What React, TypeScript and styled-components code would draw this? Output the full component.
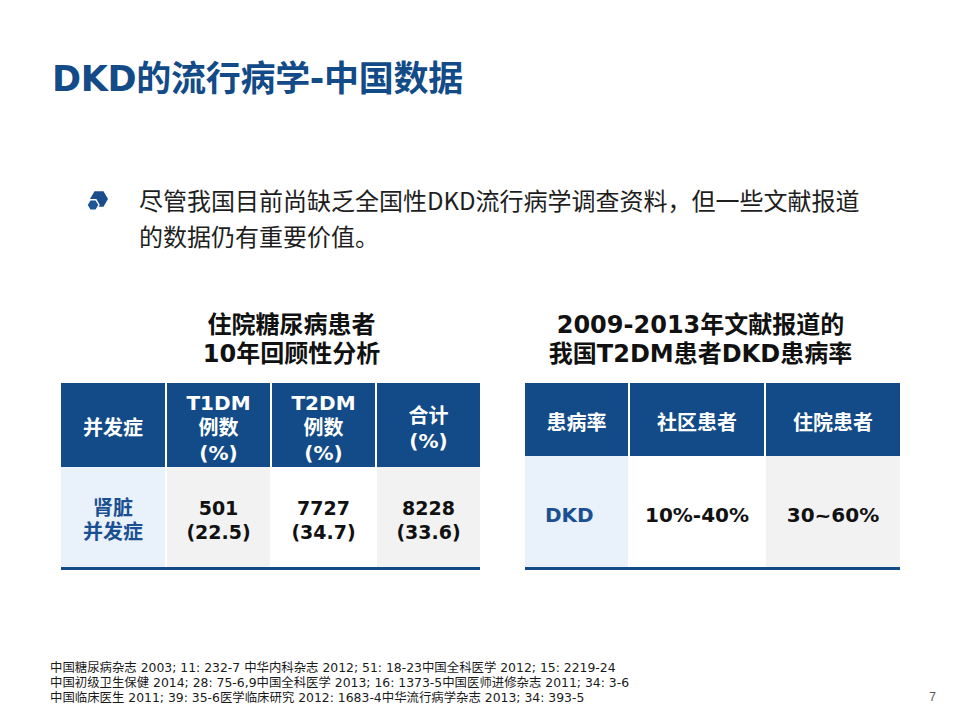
import React from "react";
import styled, { createGlobalStyle } from "styled-components";

const GlobalStyle = createGlobalStyle`
  html, body {
    margin: 0;
    padding: 0;
    background: #fff;
  }
  body {
    font-family: "Noto Sans CJK SC", "DejaVu Sans", sans-serif;
  }
`;

const BLUE = "#124b87";

const Page = styled.div`
  width: 960px;
  height: 720px;
  box-sizing: border-box;
  padding-top: 57px;
  display: flex;
  flex-direction: column;
  background: #fff;
  overflow: hidden;
`;

const Title = styled.h1`
  margin: 0 0 0 52px;
  font-family: "DejaVu Sans", "Noto Sans CJK SC", sans-serif;
  font-size: 35px;
  line-height: 44px;
  font-weight: 700;
  color: ${BLUE};
  letter-spacing: -0.3px;
`;

const BulletRow = styled.div`
  margin-top: 81px;
  padding-left: 85px;
  display: flex;
  align-items: flex-start;
  gap: 30px;
`;

const BulletIcon = styled.svg`
  width: 24px;
  height: 24px;
  margin-top: 7px;
  flex-shrink: 0;
`;

const BulletText = styled.p`
  margin: 0;
  font-family: "Noto Sans CJK SC", sans-serif;
  font-size: 24px;
  line-height: 36px;
  color: #1e1e1e;
  white-space: nowrap;
`;

const Tables = styled.div`
  margin-top: 57px;
  padding-left: 61px;
  display: flex;
  gap: 45px;
`;

const Block = styled.div<{ $width: number }>`
  width: ${({ $width }) => $width}px;
  display: flex;
  flex-direction: column;
`;

const Caption = styled.div<{ $shift: number }>`
  font-family: "DejaVu Sans", "Noto Sans CJK SC", sans-serif;
  font-size: 24px;
  line-height: 29px;
  font-weight: 700;
  color: #111;
  text-align: center;
  white-space: nowrap;
  padding-left: ${({ $shift }) => ($shift > 0 ? $shift * 2 : 0)}px;
  padding-right: ${({ $shift }) => ($shift < 0 ? -$shift * 2 : 0)}px;
  margin-bottom: 14px;
`;

const Grid = styled.div<{ $cols: string; $head: number; $body: number }>`
  display: grid;
  grid-template-columns: ${({ $cols }) => $cols};
  grid-template-rows: ${({ $head, $body }) => `${$head}px ${$body}px`};
  column-gap: 2px;
  background: #fff;
  border-bottom: 3px solid ${BLUE};
`;

const HeadCell = styled.div`
  background: ${BLUE};
  color: #fff;
  font-family: "DejaVu Sans", "Noto Sans CJK SC", sans-serif;
  font-weight: 700;
  font-size: 20px;
  line-height: 25px;
  display: flex;
  flex-direction: column;
  align-items: center;
  justify-content: center;
  text-align: center;
  padding-top: 7px;
`;

const BodyCell = styled.div<{ $bg: string; $blue?: boolean; $left?: boolean; $size?: number }>`
  background: ${({ $bg }) => $bg};
  color: ${({ $blue }) => ($blue ? "#1a5092" : "#111")};
  font-family: "DejaVu Sans", "Noto Sans CJK SC", sans-serif;
  font-weight: 700;
  font-size: ${({ $size }) => $size ?? 19}px;
  line-height: 24px;
  display: flex;
  flex-direction: column;
  align-items: ${({ $left }) => ($left ? "flex-start" : "center")};
  justify-content: center;
  text-align: center;
  padding-left: ${({ $left }) => ($left ? "20px" : "0")};
  padding-top: 6px;
`;

const Footer = styled.div`
  margin-top: auto;
  padding: 0 24px 15px 50px;
  display: flex;
  justify-content: space-between;
  align-items: flex-end;
`;

const Refs = styled.div`
  font-family: "DejaVu Sans", "Noto Sans CJK SC", sans-serif;
  font-size: 12.4px;
  line-height: 15px;
  color: #1a1a1a;
  white-space: nowrap;
`;

const PageNum = styled.div`
  font-family: "Liberation Sans", sans-serif;
  font-size: 12px;
  color: #555;
  line-height: 15px;
`;

const LIGHT_BLUE = "#e9f1fa";
const GRAY = "#f2f2f2";
const WHITE = "#ffffff";

const HexBullet = () => (
  <BulletIcon viewBox="0 0 24 24">
    <polygon points="23,10 18.5,17.8 9.5,17.8 5,10 9.5,2.2 18.5,2.2" fill="#1b4d8c" />
    <polygon
      points="14,16 11,21.2 5,21.2 2,16 5,10.8 11,10.8"
      fill="#1f5796"
      stroke="#fff"
      strokeWidth="1.4"
    />
  </BulletIcon>
);

const App: React.FC = () => {
  return (
    <>
      <GlobalStyle />
      <Page>
        <Title>DKD的流行病学-中国数据</Title>

        <BulletRow>
          <HexBullet />
          <BulletText>
            尽管我国目前尚缺乏全国性DKD流行病学调查资料，但一些文献报道
            <br />
            的数据仍有重要价值。
          </BulletText>
        </BulletRow>

        <Tables>
          <Block $width={419}>
            <Caption $shift={21}>
              住院糖尿病患者
              <br />
              10年回顾性分析
            </Caption>
            <Grid $cols="104px 103px 103px 103px" $head={84} $body={100}>
              <HeadCell>并发症</HeadCell>
              <HeadCell>
                <span>T1DM</span>
                <span>例数</span>
                <span>(%)</span>
              </HeadCell>
              <HeadCell>
                <span>T2DM</span>
                <span>例数</span>
                <span>(%)</span>
              </HeadCell>
              <HeadCell>
                <span>合计</span>
                <span>(%)</span>
              </HeadCell>
              <BodyCell $bg={LIGHT_BLUE} $blue $size={20}>
                <span>肾脏</span>
                <span>并发症</span>
              </BodyCell>
              <BodyCell $bg={GRAY}>
                <span>501</span>
                <span>(22.5)</span>
              </BodyCell>
              <BodyCell $bg={WHITE}>
                <span>7727</span>
                <span>(34.7)</span>
              </BodyCell>
              <BodyCell $bg={GRAY}>
                <span>8228</span>
                <span>(33.6)</span>
              </BodyCell>
            </Grid>
          </Block>

          <Block $width={375}>
            <Caption $shift={-12}>
              2009-2013年文献报道的
              <br />
              我国T2DM患者DKD患病率
            </Caption>
            <Grid $cols="103px 134px 134px" $head={73} $body={111}>
              <HeadCell>患病率</HeadCell>
              <HeadCell>社区患者</HeadCell>
              <HeadCell>住院患者</HeadCell>
              <BodyCell $bg={LIGHT_BLUE} $blue $left $size={20}>
                DKD
              </BodyCell>
              <BodyCell $bg={WHITE} $size={20}>
                10%-40%
              </BodyCell>
              <BodyCell $bg={GRAY} $size={20}>
                30~60%
              </BodyCell>
            </Grid>
          </Block>
        </Tables>

        <Footer>
          <Refs>
            中国糖尿病杂志 2003; 11: 232-7 中华内科杂志 2012; 51: 18-23中国全科医学 2012; 15: 2219-24
            <br />
            中国初级卫生保健 2014; 28: 75-6,9中国全科医学 2013; 16: 1373-5中国医师进修杂志 2011; 34: 3-6
            <br />
            中国临床医生 2011; 39: 35-6医学临床研究 2012: 1683-4中华流行病学杂志 2013; 34: 393-5
          </Refs>
          <PageNum>7</PageNum>
        </Footer>
      </Page>
    </>
  );
};

export default App;
